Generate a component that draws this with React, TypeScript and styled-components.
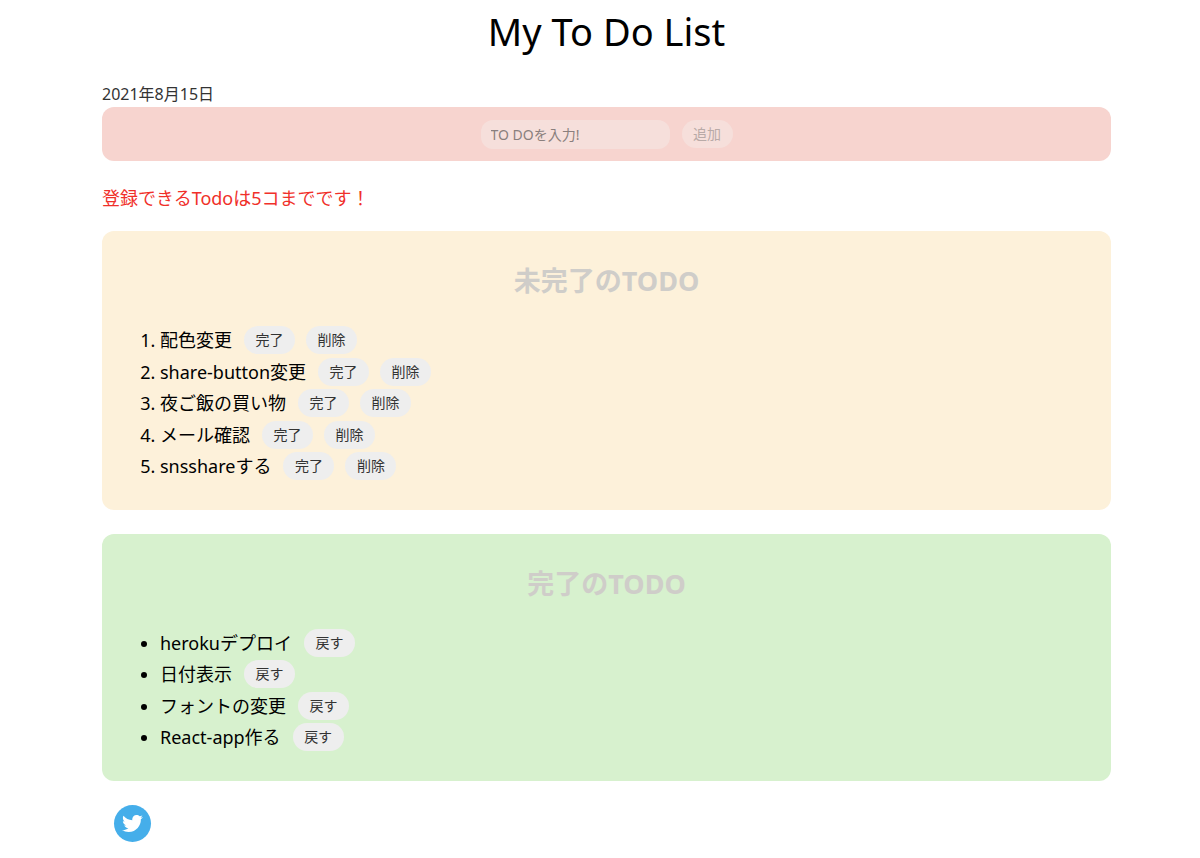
import styled, { createGlobalStyle } from "styled-components";
import { FaTwitter } from "react-icons/fa";

const GlobalStyle = createGlobalStyle`
    html, body {
        margin: 0;
        padding: 0;
        background: #fff;
    }
    body {
        font-family: "Noto Sans", "Noto Sans CJK JP", sans-serif;
        color: #000;
    }
    * {
        box-sizing: border-box;
    }
`;

const Page = styled.div`
    width: 1009px;
    margin-left: 102px;
`;
const Title = styled.h1`
    margin: 0;
    height: 84px;
    padding-top: 6px;
    font-size: 38px;
    font-weight: 400;
    line-height: 50px;
    text-align: center;
`;
const DateText = styled.div`
    height: 23px;
    font-size: 16px;
    line-height: 21px;
    color: #333;
`;
const InputArea = styled.div`
    display: flex;
    align-items: center;
    justify-content: center;
    gap: 12px;
    height: 54px;
    background: #f7d4cf;
    border-radius: 12px;
`;
const TodoInput = styled.input`
    width: 189px;
    height: 29px;
    padding: 0 10px;
    border: none;
    border-radius: 12px;
    background: #f6dfdb;
    font-family: inherit;
    font-size: 14px;
    outline: none;
    &::placeholder {
        color: #8a7f7d;
        opacity: 1;
    }
`;
const Pill = styled.button<{ $muted?: boolean }>`
    flex: none;
    width: 51px;
    height: 28px;
    padding: 0;
    border: none;
    border-radius: 14px;
    background: ${(p) => (p.$muted ? "#f6dfdb" : "#eeeeee")};
    color: ${(p) => (p.$muted ? "#b9aaa7" : "#333")};
    font-family: inherit;
    font-size: 14px;
    line-height: 28px;
`;
const ErrorText = styled.p`
    margin: 0;
    height: 70px;
    padding-top: 24px;
    font-size: 18px;
    line-height: 26px;
    color: #f0302a;
`;
const Card = styled.section<{ $bg: string }>`
    background: ${(p) => p.$bg};
    border-radius: 12px;
    padding: 32px 0 26px;
    margin-bottom: 24px;
`;
const CardTitle = styled.h2`
    margin: 0 0 27px;
    font-size: 27px;
    font-weight: 700;
    line-height: 36px;
    text-align: center;
    color: #cfcdc9;
`;
const NumberList = styled.ol`
    margin: 0;
    padding: 0 0 0 58px;
    font-size: 18px;
`;
const BulletList = styled.ul`
    margin: 0;
    padding: 0 0 0 58px;
    font-size: 18px;
`;
const Item = styled.li`
    height: 31.5px;
    line-height: 28px;
`;
const ItemRow = styled.div`
    display: flex;
    align-items: center;
    gap: 11px;
    height: 28px;
`;
const ItemText = styled.span`
    margin-right: 1px;
`;
const ShareLink = styled.a`
    display: flex;
    align-items: center;
    justify-content: center;
    width: 37px;
    height: 37px;
    margin-left: 12px;
    border-radius: 50%;
    background: #45aeea;
    color: #fff;
    font-size: 21px;
`;

const todos = ["配色変更", "share-button変更", "夜ご飯の買い物", "メール確認", "snsshareする"];
const dones = ["herokuデプロイ", "日付表示", "フォントの変更", "React-app作る"];

export default function App() {
    return (
        <>
            <GlobalStyle />
            <Page>
                <Title>My To Do List</Title>
                <DateText>2021年8月15日</DateText>
                <InputArea>
                    <TodoInput placeholder="TO DOを入力!" disabled />
                    <Pill $muted disabled>追加</Pill>
                </InputArea>
                <ErrorText>登録できるTodoは5コまでです！</ErrorText>
                <Card $bg="#fdf1da">
                    <CardTitle>未完了のTODO</CardTitle>
                    <NumberList>
                        {todos.map((todo) => (
                            <Item key={todo}>
                                <ItemRow>
                                    <ItemText>{todo}</ItemText>
                                    <Pill>完了</Pill>
                                    <Pill>削除</Pill>
                                </ItemRow>
                            </Item>
                        ))}
                    </NumberList>
                </Card>
                <Card $bg="#d7f1ce">
                    <CardTitle>完了のTODO</CardTitle>
                    <BulletList>
                        {dones.map((done) => (
                            <Item key={done}>
                                <ItemRow>
                                    <ItemText>{done}</ItemText>
                                    <Pill>戻す</Pill>
                                </ItemRow>
                            </Item>
                        ))}
                    </BulletList>
                </Card>
                <ShareLink href="#"><FaTwitter /></ShareLink>
            </Page>
        </>
    );
}
